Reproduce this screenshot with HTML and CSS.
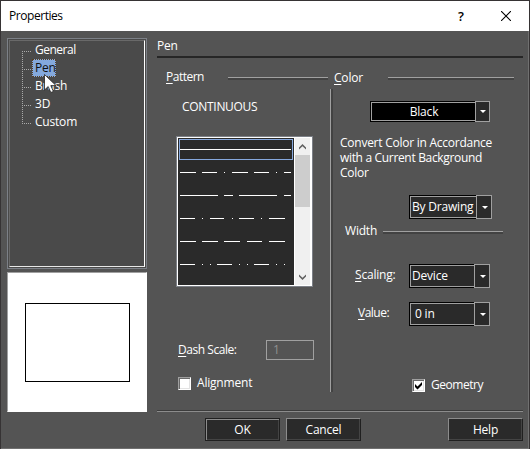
FILE: index.html
```html
<!DOCTYPE html>
<html lang="en">
<head>
<meta charset="utf-8">
<title>Properties</title>
<link rel="stylesheet" href="styles.css">
</head>
<body>
<div class="window">
  <header class="titlebar">
    <span class="t title">Properties</span>
    <span class="help-mark">?</span>
    <svg class="close" width="10" height="10" viewBox="0 0 10 10"><path d="M0 0L10 10M10 0L0 10" stroke="#000" stroke-width="1.1"/></svg>
  </header>
  <main class="main">
    <aside class="side">
      <div class="tree">
        <ul class="tree-inner">
          <li><span class="t general">General</span></li>
          <li><span class="t selected">Pen</span></li>
          <li><span class="t">Brush</span></li>
          <li><span class="t">3D</span></li>
          <li><span class="t custom">Custom</span></li>
        </ul>
      </div>
      <div class="preview"><div class="preview-shape"></div></div>
    </aside>
    <section class="panel">
      <h1 class="t heading">Pen</h1>
      <div class="columns">
        <div class="pattern">
          <div class="legend"><span class="t pattern-label"><u>P</u>attern</span><i class="rule"></i></div>
          <div class="pattern-name"><span class="t continuous">CONTINUOUS</span></div>
          <div class="list">
            <svg class="lines" width="116" height="147" viewBox="178 138 116 147" shape-rendering="crispEdges">
              <rect x="179.500" y="139.500" width="113" height="20" fill="none" stroke="#86a8dd"/>
              <g stroke="#fff" stroke-width="1">
                <path d="M180 149.500H291"/>
                <path d="M180 172.500h16m6 0h15m7 0h1m7 0h16m6 0h15m7 0h1m7 0h7"/>
                <path d="M180 195.500h38m6 0h9m6 0h38m7 0h7"/>
                <path d="M180 218.500h15m7 0h1m7 0h14m8 0h1m6 0h15m7 0h1m7 0h16"/>
                <path d="M180 241.500h16m6 0h16m6 0h16m7 0h15m7 0h16"/>
                <path d="M180 264.500h15m7 0h1m7 0h1m6 0h15m7 0h1m7 0h1m6 0h15m7 0h1m7 0h1"/>
              </g>
            </svg>
            <div class="scrollbar">
              <svg width="7" height="6" viewBox="0 0 7 6"><path d="M0 5.500V3.500L3.500 0L7 3.500V5.500L3.500 2.300Z" fill="#606060"/></svg>
              <div class="thumb"></div>
              <svg class="down" width="7" height="6" viewBox="0 0 7 6"><path d="M0 .5V2.500L3.500 6L7 2.500V.5L3.500 3.700Z" fill="#606060"/></svg>
            </div>
          </div>
          <div class="dash-row"><span class="t dash-label"><u>D</u>ash Scale:</span><span class="t dash-input">1</span></div>
          <div class="check-row"><span class="check"></span><span class="t alignment">Alignment</span></div>
        </div>
        <div class="divider"></div>
        <div class="color">
          <div class="legend"><span class="t color-label"><u>C</u>olor</span><i class="rule"></i></div>
          <div class="combo combo-color"><span class="t value">Black</span><span class="arrow"></span></div>
          <p class="t note">Convert Color in Accordance<br><span class="tight">with a Current Background</span><br>Color</p>
          <div class="combo combo-by"><span class="t value">By Drawing</span><span class="arrow"></span></div>
          <div class="legend width-legend"><span class="t width-label">Width</span><i class="rule"></i></div>
          <div class="field scaling"><span class="t label"><u>S</u>caling:</span><div class="combo"><span class="t value">Device</span><span class="arrow"></span></div></div>
          <div class="field amount"><span class="t label"><u>V</u>alue:</span><div class="combo"><span class="t value">0 in</span><span class="arrow"></span></div></div>
          <div class="check-row geometry-row"><span class="check"><svg width="9" height="9" viewBox="0 0 9 9"><path d="M1 3L3.500 5.500L8 1V4L3.500 8.500L1 6Z" fill="#000"/></svg></span><span class="t geometry">Geometry</span></div>
        </div>
      </div>
    </section>
  </main>
  <footer class="footer">
    <div class="button ok"><span class="t">OK</span></div>
    <div class="button"><span class="t">Cancel</span></div>
    <div class="button help"><span class="t">Help</span></div>
  </footer>
  <svg class="cursor" width="13" height="20" viewBox="0 0 13 20"><path d="M.5 .5V16L4.200 12.500L6.800 18.500L9.400 17.400L6.800 11.600H12Z" fill="#fff" stroke="#222" stroke-width=".8"/></svg>
</div>
</body>
</html>
```
FILE: styles.css
```css
* { box-sizing: border-box; }
body {
  margin: 0;
  width: 530px;
  height: 449px;
  overflow: hidden;
  background: #363334;
  color: #fff;
  font: 12px/18px "Open Sans", sans-serif;
}
.t { letter-spacing: -0.2px; white-space: nowrap; }
.title { letter-spacing: -0.45px; }
.general { letter-spacing: -0.5px; }
u { text-decoration: underline; text-underline-offset: 2px; text-decoration-thickness: 1px; text-decoration-skip-ink: none; }
.window {
  position: relative;
  width: 528px;
  height: 448px;
  margin: 1px 0 0 1px;
  background: #545454;
  border-right: 1px solid #707070;
  border-bottom: 1px solid #707070;
}
.titlebar {
  display: flex;
  align-items: center;
  width: 528px;
  height: 30px;
  padding-left: 8px;
  background: #fff;
  color: #000;
}
.help-mark { margin-left: auto; margin-right: 37px; font-size: 13px; font-weight: 600; }
.close { margin-right: 18px; }

.main { display: flex; gap: 10px; height: 381px; padding: 0 5px 0 6px; }
.side { flex: 0 0 140px; min-width: 0; padding-top: 7px; }
.tree {
  height: 231px;
  padding: 1px;
  border: 1px solid #7c8087;
  background: #4a4a4a;
}
.tree-inner {
  height: 227px;
  margin: 0;
  padding: 0 0 0 12px;
  list-style: none;
  border: 1px solid #696969;
  border-right-color: #fff;
  border-bottom-color: #e8e8e8;
}
.tree li {
  display: flex;
  height: 18px;
  align-items: center;
  background:
    repeating-linear-gradient(90deg, #aaa 0 1px, transparent 1px 2px) 0 10px / 9px 1px no-repeat,
    repeating-linear-gradient(#aaa 0 1px, transparent 1px 2px) 0 0 / 1px 18px no-repeat;
}
.tree li:first-child {
  background:
    repeating-linear-gradient(90deg, #aaa 0 1px, transparent 1px 2px) 0 10px / 9px 1px no-repeat,
    repeating-linear-gradient(#aaa 0 1px, transparent 1px 2px) 0 10px / 1px 8px no-repeat;
}
.tree li:last-child {
  background:
    repeating-linear-gradient(90deg, #aaa 0 1px, transparent 1px 2px) 0 10px / 9px 1px no-repeat,
    repeating-linear-gradient(#aaa 0 1px, transparent 1px 2px) 0 0 / 1px 10px no-repeat;
}
.tree li .t { margin-left: 13px; }
.tree li .selected {
  width: 24px;
  height: 18px;
  margin-left: 10px;
  padding-left: 2px;
  line-height: 16px;
  border: 1px dotted #5a4020;
  background: #84a9dd;
  color: #111;
}
.preview {
  height: 140px;
  margin-top: 3px;
  padding: 30px 0 0 17px;
  border: 1px solid #a0a0a0;
  border-right-color: #fff;
  border-bottom-color: #fff;
  background: #fff;
}
.preview-shape { width: 105px; height: 79px; border: 1px solid #000; }

.panel { flex: 1; height: 381px; border-bottom: 1px solid #8c8c8c; box-shadow: inset 0 -1px #3c3c3c; }
.heading {
  height: 27px;
  margin: 0;
  padding-top: 6px;
  border-bottom: 2px solid #262626;
  font-size: 12px;
  font-weight: 400;
}
.columns { display: flex; }
.pattern { flex: 0 0 173px; padding: 9px 2px 0 9px; }
.divider {
  width: 3px;
  height: 303px;
  margin-top: 31px;
  border-left: 1px solid #a0a0a0;
  background: #424242;
}
.color { flex: 1; padding: 9px 0 0; }
.legend { display: flex; align-items: center; height: 20px; }
.pattern-label { width: 62px; letter-spacing: -0.5px; }
.color-label { width: 55px; padding: 2px 0 0 1px; }
.rule { flex: 1; height: 3px; margin-top: 3px; border-top: 1px solid #a0a0a0; background: #424242; }
.color .rule { flex: 0 0 126px; }
.pattern-name { height: 20px; margin: 10px 0 19px 16px; line-height: 20px; }
.continuous { letter-spacing: -0.3px; }
.list {
  display: flex;
  width: 137px;
  height: 151px;
  margin-left: 10px;
  padding: 1px;
  border: 1px solid #7c8087;
  background: #fff;
}
.lines { display: block; background: #2a2a2a; }
.scrollbar {
  display: flex;
  flex-direction: column;
  align-items: center;
  width: 15px;
  height: 147px;
  margin-left: 1px;
  padding-top: 6px;
  background: #f0f0f0;
}
.thumb { width: 15px; height: 52px; margin-top: 5px; background: #cdcdcd; }
.down { margin-top: 67px; }
.dash-row { display: flex; align-items: center; height: 20px; margin: 53px 0 13px 12px; }
.dash-label { width: 88px; letter-spacing: -0.45px; }
.dash-input { width: 48px; height: 20px; padding-left: 6px; border: 1px solid #a0a0a0; color: #909090; }
.check-row { display: flex; align-items: center; height: 20px; margin-left: 12px; gap: 6px; }
.check {
  display: flex;
  align-items: center;
  justify-content: center;
  width: 13px;
  height: 13px;
  border: 1px solid #a0a0a0;
  border-right-color: #fff;
  border-bottom-color: #fff;
  box-shadow: inset 1px 1px #696969, inset -1px -1px #e3e3e3;
  background: #fff;
}
.combo {
  display: flex;
  width: 81px;
  height: 24px;
  background: #2a2a2a;
  border: 1px solid #000;
  border-right: 0;
}
.combo .value { flex: 1; padding-left: 1px; line-height: 20px; border: 1px solid #a0a0a0; border-right: 0; }
.arrow {
  display: flex;
  flex: 0 0 16px;
  align-items: center;
  justify-content: center;
  margin: -1px 0;
  padding-left: 1px;
  border: 1px solid #a0a0a0;
}
.arrow::before { content: ""; border: 3px solid transparent; border-top-color: #fff; border-bottom: 0; }
.combo-color { width: 120px; height: 21px; margin: 14px 0 0 37px; background: #000; }
.combo-color .value { padding: 0 0 0 1px; text-align: center; line-height: 17px; }
.combo-color .arrow { flex-basis: 15px; background: #2a2a2a; }
.note { height: 45px; margin: 13px 0 15px 7px; line-height: 15px; letter-spacing: -0.25px; }
.tight { letter-spacing: -0.33px; }
.combo-by { width: 83px; margin-left: 76px; }
.width-legend { margin-top: 2px; padding-left: 12px; }
.width-label { width: 38px; }
.color .width-legend .rule { flex-basis: 120px; }
.field { display: flex; align-items: center; height: 24px; }
.scaling { margin-top: 23px; padding-left: 22px; }
.scaling .label { width: 54px; height: 21px; }
.amount { margin-top: 14px; padding-left: 25px; }
.amount .label { width: 51px; height: 20px; letter-spacing: -0.5px; }
.amount .value { padding-left: 4px; }
.geometry-row { margin: 49px 0 0 79px; }
.geometry { letter-spacing: -0.45px; }

.footer { display: flex; gap: 6px; padding: 6px 5px 0 204px; }
.button {
  width: 75px;
  height: 23px;
  background: #2a2a2a;
  border: 1px solid #8c8c8c;
  border-right-color: #202020;
  border-bottom-color: #202020;
  box-shadow: inset -1px -1px #444;
  line-height: 21px;
  text-align: center;
}
.ok { border-color: #202020; box-shadow: inset 1px 1px #8c8c8c, inset -1px -1px #444; }
.help { margin-left: auto; }
.cursor { position: absolute; left: 43px; top: 73px; }
```
